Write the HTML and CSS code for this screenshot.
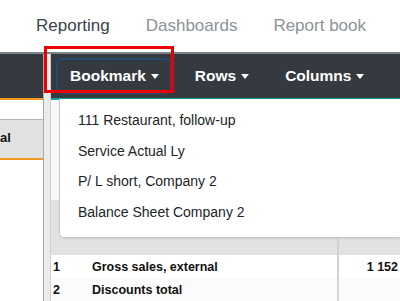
FILE: index.html
```html
<!DOCTYPE html>
<html>
<head>
<meta charset="utf-8">
<link rel="stylesheet" href="styles.css">
</head>
<body>
<div class="page">
  <nav class="tabs">
    <span class="tab active">Reporting</span>
    <span class="tab">Dashboards</span>
    <span class="tab">Report book</span>
  </nav>
  <div class="workspace">
    <aside class="side">
      <div class="side-bar"></div>
      <div class="side-body">
        <div class="side-head">al</div>
      </div>
    </aside>
    <div class="splitter"></div>
    <main class="main">
      <div class="toolbar">
        <button class="tool focused">Bookmark<span class="caret"></span></button>
        <button class="tool">Rows<span class="caret"></span></button>
        <button class="tool">Columns<span class="caret"></span></button>
        <button class="tool">D</button>
      </div>
      <div class="content">
        <div class="pre"></div>
        <div class="thead"><div class="c-main"></div><div class="c-val"></div></div>
        <div class="row"><div class="c-main"><span class="num">1</span><span class="name">Gross sales, external</span></div><div class="c-val">1 152</div></div>
        <div class="row alt"><div class="c-main"><span class="num">2</span><span class="name">Discounts total</span></div><div class="c-val"></div></div>
      </div>
      <ul class="menu">
        <li>111 Restaurant, follow-up</li>
        <li>Service Actual Ly</li>
        <li>P/ L short, Company 2</li>
        <li>Balance Sheet Company 2</li>
      </ul>
    </main>
  </div>
  <div class="highlight"></div>
</div>
</body>
</html>
```
FILE: styles.css
```css
* { box-sizing: border-box; }
html, body { margin: 0; padding: 0; }
body {
  width: 400px;
  height: 301px;
  overflow: hidden;
  background: #fff;
  font-family: "Liberation Sans", Arial, sans-serif;
}
.page { position: relative; width: 400px; height: 301px; overflow: hidden; }

.tabs {
  height: 52px;
  display: flex;
  align-items: center;
  gap: 36px;
  padding-left: 36px;
}
.tab { font-size: 17px; color: #8d9399; }
.tab.active { color: #3a434c; }

.workspace {
  display: flex;
  border-top: 2px solid #7b858c;
  height: 249px;
}

.side { width: 43px; flex: none; }
.side-bar {
  height: 46px;
  background: #343a40;
  border-bottom: 2px solid #f29a1f;
}
.side-body { padding-top: 19px; }
.side-head {
  height: 41px;
  background: #e1e1e1;
  border-top: 1px solid #b5b5b5;
  border-bottom: 2px solid #f29a1f;
  font-size: 13px;
  font-weight: bold;
  color: #111;
  line-height: 36px;
}

.splitter {
  width: 8px;
  flex: none;
  background: #ebebeb;
  border-left: 1px solid #a9a9a9;
  border-right: 1px solid #d2d2d2;
}

.main { position: relative; flex: 1; min-width: 0; }
.toolbar {
  height: 46px;
  background: #343a40;
  border-bottom: 2px solid #1aa39a;
  display: flex;
  align-items: center;
  gap: 9px;
  padding-left: 5px;
  white-space: nowrap;
  overflow: hidden;
}
.tool {
  display: flex;
  align-items: center;
  height: 36px;
  padding: 0 11px 0 12px;
  border: 2px solid transparent;
  border-radius: 6px;
  background: transparent;
  color: #fff;
  font-family: "Liberation Sans", Arial, sans-serif;
  font-size: 15.5px;
  font-weight: bold;
  flex: none;
}
.tool.focused { border-color: #234a6c; }
.caret {
  width: 0; height: 0;
  margin-left: 5px;
  border-left: 4.5px solid transparent;
  border-right: 4.5px solid transparent;
  border-top: 5px solid #fff;
}

.content { background: #fff; }
.pre { height: 100px; background: #f8f9fa; }
.thead { display: flex; height: 55px; background: #e2e2e2; }
.row { display: flex; height: 23px; background: #fff; font-size: 12.5px; font-weight: bold; color: #111; }
.row.alt { background: #fbfbfb; }
.c-main { flex: 1; display: flex; align-items: center; padding-left: 2px; padding-top: 1px; }
.c-val {
  width: 63px;
  flex: none;
  border-left: 2px solid #d3d3d3;
  display: flex;
  align-items: center;
  justify-content: flex-end;
  padding-right: 2px;
  padding-top: 1px;
}
.num { width: 39px; }

.menu {
  position: absolute;
  left: 8px;
  top: 45px;
  width: 344px;
  height: 139px;
  margin: 0;
  padding: 6px 0 10px;
  list-style: none;
  background: #fff;
  border: 1px solid #c8c8c8;
  border-top: none;
  border-radius: 0 0 5px 5px;
  box-shadow: 0 1px 2px rgba(0,0,0,0.08);
}
.menu li {
  height: 30.5px;
  line-height: 30px;
  padding-left: 18px;
  font-size: 14px;
  color: #212529;
  white-space: nowrap;
}

.highlight {
  position: absolute;
  left: 44px;
  top: 46px;
  width: 130px;
  height: 47px;
  border: 3px solid #ee0000;
}
```
